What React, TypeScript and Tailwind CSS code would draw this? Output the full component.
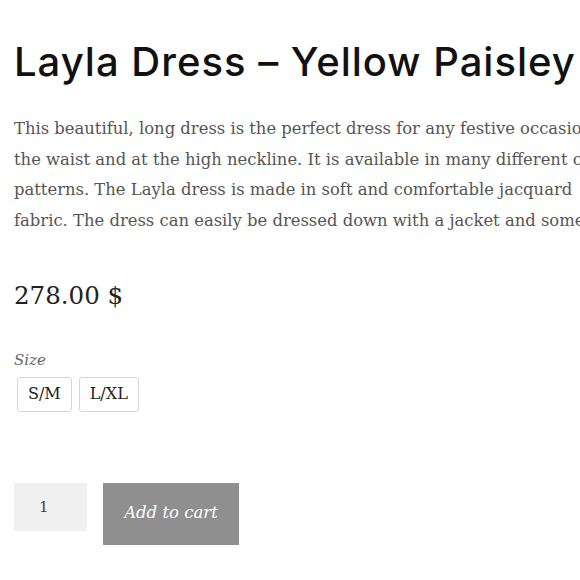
export default function App() {
  const lines = [
    "This beautiful, long dress is the perfect dress for any festive occasion. It is fitted at",
    "the waist and at the high neckline. It is available in many different colours and",
    "patterns. The Layla dress is made in soft and comfortable jacquard",
    "fabric. The dress can easily be dressed down with a jacket and some sneakers.",
  ];

  return (
    <div className="w-[580px] h-[580px] overflow-hidden bg-white">
      <div className="w-[900px] pl-[14px] pt-[38px]">
        <h1 className="font-['Inter',sans-serif] font-medium text-[40px] leading-[48px] text-[#111] tracking-[1px]">
          Layla Dress – Yellow Paisley
        </h1>

        {/* Description */}
        <div className="mt-[28px] font-['DejaVu_Serif',serif] text-[16.4px] leading-[30.7px] text-[#555]">
          {lines.map((l) => (
            <p key={l} className="whitespace-nowrap">{l}</p>
          ))}
        </div>

        {/* Price */}
        <p className="mt-[44px] font-['DejaVu_Serif',serif] text-[24.5px] leading-[30px] text-[#222]">
          278.00 $
        </p>

        {/* Size */}
        <p className="mt-[38px] font-['DejaVu_Serif',serif] italic text-[15px] leading-[22px] text-[#666]">
          Size
        </p>
        <div className="mt-[6px] ml-[3px] flex gap-[7px]">
          {["S/M", "L/XL"].map((s) => (
            <span
              key={s}
              className="h-[35px] px-[10px] flex items-center border border-[#d6d6d6] rounded-[3px] font-['DejaVu_Serif',serif] text-[16px] text-[#222]"
            >
              {s}
            </span>
          ))}
        </div>

        {/* Add to cart */}
        <div className="mt-[71px] flex items-start gap-[16px]">
          <div className="w-[73px] h-[48px] bg-[#f0f0f0] flex items-center pl-[25px] font-['DejaVu_Serif',serif] text-[15px] text-[#444]">
            1
          </div>
          <button className="w-[136px] h-[62px] bg-[#8f8f8f] text-white italic font-['DejaVu_Serif',serif] text-[16.5px]">
            Add to cart
          </button>
        </div>
      </div>
    </div>
  );
}
